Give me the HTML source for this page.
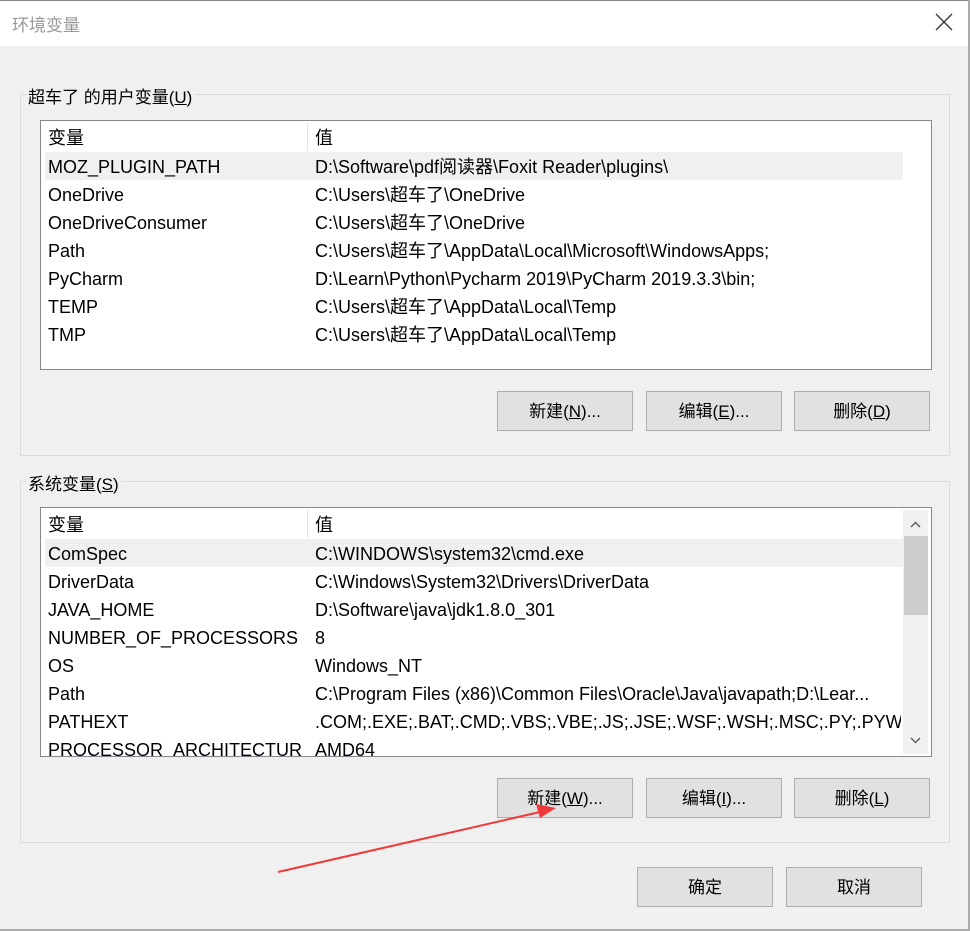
<!DOCTYPE html><html><head><meta charset="utf-8"><style>
body{margin:0;width:970px;height:931px;background:#f0f0f0;font-family:"Liberation Sans","Noto Sans CJK SC",sans-serif;font-size:17px;color:#000;position:relative;overflow:hidden}
.a{position:absolute}
.title{left:0;top:0;width:968px;height:45px;background:#fff;border-top:1px solid #888}
.grp{border:1px solid #dcdcdc;}
.leg{background:#f0f0f0;padding:0 2px;font-size:17px}
.list{background:#fff;border:1px solid #828790;overflow:hidden}
.row{position:absolute;left:4px;height:28px;line-height:30px;white-space:nowrap;font-size:18px}
.row span{position:absolute}
.btn{background:#e1e1e1;border:1px solid #adadad;text-align:center;line-height:40px;box-sizing:border-box}
</style></head><body>
<div class="a title"></div>
<div class="a" style="left:12px;top:11px;color:#999;font-size:17px">环境变量</div>
<svg class="a" style="left:935px;top:13px" width="18" height="18"><path d="M1 1L17 17M17 1L1 17" stroke="#333" stroke-width="1.3"/></svg>
<div class="a" style="left:968px;top:0;width:2px;height:931px;background:#aaa"></div>
<div class="a" style="left:0;top:929px;width:970px;height:2px;background:#aaa"></div>

<div class="a grp" style="left:20px;top:94px;width:928px;height:360px"></div>
<div class="a leg" style="left:26px;top:83px">超车了 的用户变量(<u>U</u>)</div>
<div class="a list" style="left:40px;top:120px;width:890px;height:248px">
<div class="a" style="left:266px;top:2px;width:1px;height:28px;background:#e5e5e5"></div>
<div class="row" style="top:2px"><span style="left:3px">变量</span><span style="left:270px">值</span></div>
<div class="a" style="left:4px;top:31px;width:858px;height:28px;background:#f0f0f0"></div>
<div class="row" style="top:31px"><span style="left:3px">MOZ_PLUGIN_PATH</span><span style="left:270px">D:\Software\pdf阅读器\Foxit Reader\plugins\</span></div>
<div class="row" style="top:59px"><span style="left:3px">OneDrive</span><span style="left:270px">C:\Users\超车了\OneDrive</span></div>
<div class="row" style="top:87px"><span style="left:3px">OneDriveConsumer</span><span style="left:270px">C:\Users\超车了\OneDrive</span></div>
<div class="row" style="top:115px"><span style="left:3px">Path</span><span style="left:270px">C:\Users\超车了\AppData\Local\Microsoft\WindowsApps;</span></div>
<div class="row" style="top:143px"><span style="left:3px">PyCharm</span><span style="left:270px">D:\Learn\Python\Pycharm 2019\PyCharm 2019.3.3\bin;</span></div>
<div class="row" style="top:171px"><span style="left:3px">TEMP</span><span style="left:270px">C:\Users\超车了\AppData\Local\Temp</span></div>
<div class="row" style="top:199px"><span style="left:3px">TMP</span><span style="left:270px">C:\Users\超车了\AppData\Local\Temp</span></div>
</div>
<div class="a btn" style="left:497px;top:391px;width:136px;height:40px">新建(<u>N</u>)...</div>
<div class="a btn" style="left:646px;top:391px;width:136px;height:40px">编辑(<u>E</u>)...</div>
<div class="a btn" style="left:794px;top:391px;width:136px;height:40px">删除(<u>D</u>)</div>

<div class="a grp" style="left:20px;top:481px;width:928px;height:360px"></div>
<div class="a leg" style="left:26px;top:470px">系统变量(<u>S</u>)</div>
<div class="a list" style="left:40px;top:507px;width:890px;height:248px">
<div class="a" style="left:266px;top:2px;width:1px;height:28px;background:#e5e5e5"></div>
<div class="row" style="top:2px"><span style="left:3px">变量</span><span style="left:270px">值</span></div>
<div class="a" style="left:4px;top:31px;width:858px;height:28px;background:#f0f0f0"></div>
<div class="row" style="top:31px"><span style="left:3px">ComSpec</span><span style="left:270px">C:\WINDOWS\system32\cmd.exe</span></div>
<div class="row" style="top:59px"><span style="left:3px">DriverData</span><span style="left:270px">C:\Windows\System32\Drivers\DriverData</span></div>
<div class="row" style="top:87px"><span style="left:3px">JAVA_HOME</span><span style="left:270px">D:\Software\java\jdk1.8.0_301</span></div>
<div class="row" style="top:115px"><span style="left:3px">NUMBER_OF_PROCESSORS</span><span style="left:270px">8</span></div>
<div class="row" style="top:143px"><span style="left:3px">OS</span><span style="left:270px">Windows_NT</span></div>
<div class="row" style="top:171px"><span style="left:3px;width:260px;overflow:hidden">Path</span><span style="left:270px;width:586px;overflow:hidden">C:\Program Files (x86)\Common Files\Oracle\Java\javapath;D:\Lear...</span></div>
<div class="row" style="top:199px"><span style="left:3px">PATHEXT</span><span style="left:270px;width:586px;overflow:hidden">.COM;.EXE;.BAT;.CMD;.VBS;.VBE;.JS;.JSE;.WSF;.WSH;.MSC;.PY;.PYW</span></div>
<div class="row" style="top:227px"><span style="left:3px;width:255px;overflow:hidden">PROCESSOR_ARCHITECTURE</span><span style="left:270px">AMD64</span></div>
<div class="a" style="left:862px;top:2px;width:25px;height:244px;background:#f0f0f0"></div>
<div class="a" style="left:863px;top:28px;width:24px;height:79px;background:#cdcdcd"></div>
<svg class="a" style="left:862px;top:2px" width="25" height="244"><path d="M8 17l4.5-4.5L17 17" stroke="#606060" stroke-width="1.5" fill="none"/><path d="M8 228l4.5 4.5L17 228" stroke="#606060" stroke-width="1.5" fill="none"/></svg>
</div>
<div class="a btn" style="left:497px;top:778px;width:136px;height:40px">新建(<u>W</u>)...</div>
<div class="a btn" style="left:646px;top:778px;width:136px;height:40px">编辑(<u>I</u>)...</div>
<div class="a btn" style="left:794px;top:778px;width:136px;height:40px">删除(<u>L</u>)</div>

<div class="a btn" style="left:637px;top:867px;width:136px;height:40px">确定</div>
<div class="a btn" style="left:786px;top:867px;width:136px;height:40px">取消</div>
<svg class="a" style="left:0;top:0" width="970" height="931"><line x1="278" y1="872" x2="540" y2="812" stroke="#f03a3a" stroke-width="2"/><path d="M556 808L536 804L540 818Z" fill="#f03a3a"/></svg>
</body></html>
